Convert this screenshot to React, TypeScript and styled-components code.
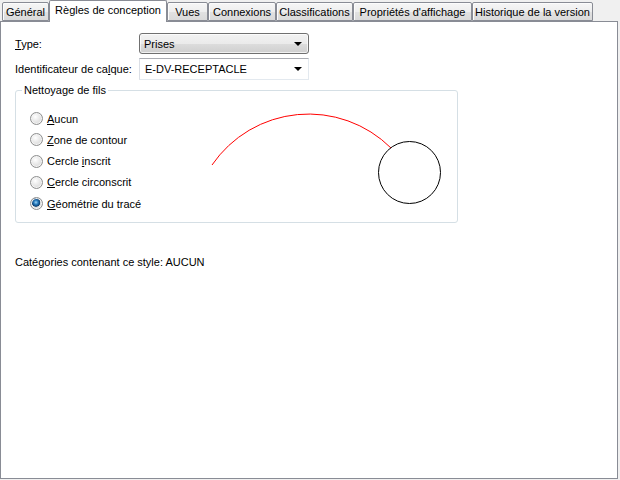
import React, { useState } from "react";
import styled, { createGlobalStyle } from "styled-components";

const GlobalStyle = createGlobalStyle`
  html, body {
    margin: 0;
    padding: 0;
    background: #f0f0f0;
  }
  body {
    font-family: "Liberation Sans", Arial, sans-serif;
    font-size: 11px;
    color: #000;
  }
`;

const tabs = [
  { label: "Général", width: 47 },
  { label: "Règles de conception", width: 118 },
  { label: "Vues", width: 41 },
  { label: "Connexions", width: 68 },
  { label: "Classifications", width: 77 },
  { label: "Propriétés d'affichage", width: 119 },
  { label: "Historique de la version", width: 121 },
];

const options = [
  { key: "A", rest: "ucun", pre: "" },
  { key: "Z", rest: "one de contour", pre: "" },
  { key: "i", rest: "nscrit", pre: "Cercle " },
  { key: "C", rest: "ercle circonscrit", pre: "" },
  { key: "G", rest: "éométrie du tracé", pre: "" },
];

const App = () => {
  const [active, setActive] = useState(1);
  const [choice, setChoice] = useState(4);

  return (
    <Window>
      <GlobalStyle />
      <TabStrip>
        {tabs.map((t, i) => (
          <Tab
            key={t.label}
            $width={t.width}
            $active={i === active}
            onClick={() => setActive(i)}
          >
            {t.label}
          </Tab>
        ))}
      </TabStrip>

      <Panel>
        <FormRow>
          <Label>
            <u>T</u>ype:
          </Label>
          <ButtonCombo>
            <span>Prises</span>
            <Arrow />
          </ButtonCombo>
        </FormRow>
        <FormRow>
          <Label>
            Identificateur de ca<u>l</u>que:
          </Label>
          <EditCombo>
            <span>E-DV-RECEPTACLE</span>
            <Arrow />
          </EditCombo>
        </FormRow>

        <GroupBox>
          <Legend>Nettoyage de fils</Legend>
          <RadioList>
            {options.map((o, i) => (
              <RadioRow key={o.key + o.rest} onClick={() => setChoice(i)}>
                <RadioDot $checked={i === choice} />
                <span>
                  {o.pre}
                  <u>{o.key}</u>
                  {o.rest}
                </span>
              </RadioRow>
            ))}
          </RadioList>
          <Preview width="240" height="100" viewBox="205 110 240 100">
            <path
              d="M212 165 A117 117 0 0 1 391 148"
              fill="none"
              stroke="#ff0000"
              strokeWidth="1"
            />
            <circle
              cx="409.5"
              cy="172.5"
              r="31"
              fill="none"
              stroke="#000"
              strokeWidth="1"
            />
          </Preview>
        </GroupBox>

        <Footer>Catégories contenant ce style: AUCUN</Footer>
      </Panel>
    </Window>
  );
};

export default App;

const Window = styled.div`
  width: 620px;
  height: 480px;
  overflow: hidden;
`;

const TabStrip = styled.div`
  display: flex;
  align-items: flex-end;
  height: 21px;
  padding-left: 2px;
  position: relative;
  z-index: 1;
`;

const Tab = styled.div<{ $width: number; $active: boolean }>`
  box-sizing: border-box;
  width: ${(p) => p.$width}px;
  height: ${(p) => (p.$active ? 22 : 19)}px;
  margin-bottom: ${(p) => (p.$active ? -1 : 0)}px;
  border: 1px solid #898c95;
  border-bottom: ${(p) => (p.$active ? "none" : "1px solid #898c95")};
  border-radius: 2px 2px 0 0;
  background: ${(p) =>
    p.$active
      ? "#fff"
      : "linear-gradient(to bottom, #f6f6f6 0%, #eeeeee 50%, #e2e2e2 51%, #dadada 100%)"};
  box-shadow: ${(p) => (p.$active ? "none" : "inset 1px 1px 0 #fcfcfc")};
  display: flex;
  justify-content: center;
  align-items: ${(p) => (p.$active ? "flex-start" : "center")};
  padding-top: ${(p) => (p.$active ? 3 : 1)}px;
  white-space: nowrap;
  cursor: default;
`;

const Panel = styled.div`
  box-sizing: border-box;
  width: 618px;
  height: 458px;
  background: #fff;
  border: 1px solid #898c95;
  padding: 11px 14px;
  display: flex;
  flex-direction: column;
`;

const FormRow = styled.div`
  display: flex;
  align-items: center;
  margin-bottom: 4px;
`;

const Label = styled.div`
  width: 124px;
`;

const ComboBase = styled.div`
  box-sizing: border-box;
  width: 170px;
  display: flex;
  align-items: center;
  justify-content: space-between;
  padding: 0 4px 0 4px;
`;

const ButtonCombo = styled(ComboBase)`
  height: 21px;
  border: 1px solid #707070;
  border-radius: 3px;
  background: linear-gradient(
    to bottom,
    #f2f2f2 0%,
    #ebebeb 50%,
    #dddddd 51%,
    #cfcfcf 100%
  );
  box-shadow: inset 0 0 0 1px rgba(255, 255, 255, 0.7);
`;

const EditCombo = styled(ComboBase)`
  height: 22px;
  border: 1px solid #e3e9ef;
  border-top-color: #abadb3;
  border-left-color: #dbdfe6;
  background: #fff;
  padding-left: 5px;
`;

const Arrow = styled.i`
  width: 0;
  height: 0;
  margin-right: 2px;
  border-left: 4px solid transparent;
  border-right: 4px solid transparent;
  border-top: 4px solid #000;
`;

const GroupBox = styled.fieldset`
  box-sizing: border-box;
  width: 443px;
  margin: 0;
  padding: 11px 0 8px 0;
  border: 1px solid #d5dfe5;
  border-radius: 3px;
  display: flex;
  align-items: flex-start;
`;

const Legend = styled.legend`
  margin-left: 6px;
  padding: 0 2px;
  line-height: 13px;
`;

const RadioList = styled.div`
  width: 175px;
  margin-left: 14px;
  display: flex;
  flex-direction: column;
`;

const RadioRow = styled.div`
  display: flex;
  align-items: center;
  gap: 4px;
  height: 21.25px;
  cursor: default;
`;

const RadioDot = styled.span<{ $checked: boolean }>`
  box-sizing: border-box;
  width: 13px;
  height: 13px;
  border-radius: 50%;
  border: 1px solid #8e8f8f;
  background: ${(p) =>
    p.$checked
      ? "radial-gradient(circle at 45% 40%, #9fd4f4 0, #2b7fc0 2px, #0b3f72 4px, #d8d8d8 4.6px, #f4f4f4 100%)"
      : "radial-gradient(circle at 40% 35%, #ffffff 0, #e8e8e8 45%, #cfcfcf 100%)"};
  box-shadow: inset 0 0 0 1px #f4f4f4;
  flex-shrink: 0;
`;

const Preview = styled.svg`
  display: block;
  margin-top: 2px;
  overflow: visible;
`;

const Footer = styled.div`
  margin-top: 33px;
`;
